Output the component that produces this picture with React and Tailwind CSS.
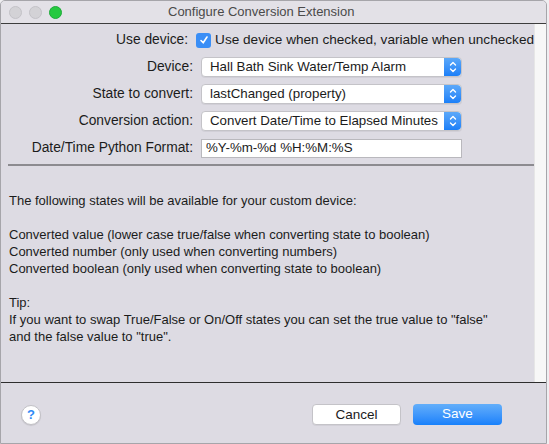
import { useState } from 'react';

const font = { fontFamily: '"Liberation Sans", Arial, sans-serif' };

// up/down chevrons on the blue stepper of a popup button
function Stepper() {
  return (
    <div className="flex h-full w-[17px] items-center justify-center rounded-r-[4px] bg-gradient-to-b from-[#5ba8f9] to-[#1a7ff8]">
      <svg width="8" height="12" viewBox="0 0 8 12" fill="none" stroke="white" strokeWidth="1.4" strokeLinecap="round" strokeLinejoin="round">
        <path d="M1.5 4 L4 1.5 L6.5 4" />
        <path d="M1.5 8 L4 10.5 L6.5 8" />
      </svg>
    </div>
  );
}

function Popup({ value }) {
  return (
    <div className="flex h-[20px] w-[261px] items-stretch rounded-[4px] border border-[#c4c3c8] bg-white shadow-[0_1px_0_rgba(0,0,0,0.05)]">
      <div className="flex flex-1 items-center whitespace-nowrap pl-[8px] text-[13.3px] text-[#1b1b1b]">{value}</div>
      <Stepper />
    </div>
  );
}

function Row({ label, children }) {
  return (
    <div className="flex h-[20px] items-center">
      <div className="w-[193px] whitespace-nowrap pr-[1px] text-right text-[13.8px] text-[#1b1b1b]">{label}</div>
      <div className="ml-[7px] flex items-center">{children}</div>
    </div>
  );
}

export default function App() {
  const [useDevice, setUseDevice] = useState(true);
  const [format, setFormat] = useState('%Y-%m-%d %H:%M:%S');

  return (
    <div className="h-[444px] w-[549px] overflow-hidden bg-[#efeef1]" style={font}>
      <div className="flex h-[444px] w-[547px] flex-col overflow-hidden rounded-t-[5px] border border-[#a6a5aa] bg-[#dddbe3]">
        {/* title bar */}
        <div className="flex h-[23px] shrink-0 items-center border-b border-[#3d3d3d] bg-[#e3e1e7]">
          <div className="ml-[8px] flex gap-[7px]">
            <span className="h-[13px] w-[13px] rounded-full border border-[#c3c2c7] bg-[#d3d2d6]" />
            <span className="h-[13px] w-[13px] rounded-full border border-[#c3c2c7] bg-[#d3d2d6]" />
            <span className="h-[13px] w-[13px] rounded-full border border-[#1eaa3a] bg-[#26c940]" />
          </div>
          <div className="ml-[106px] text-[13px] text-[#4a4a4a]">Configure Conversion Extension</div>
        </div>

        {/* form + scroller */}
        <div className="flex h-[359px] shrink-0 border-b border-[#2e2e2e]">
          <div className="flex-1 overflow-hidden">
            <div className="flex flex-col gap-[7px] pt-[6px]">
              <Row label="Use device:">
                <button
                  onClick={() => setUseDevice(!useDevice)}
                  className={`flex h-[15px] w-[15px] items-center justify-center rounded-[3px] ${useDevice ? 'bg-[#3a8ef6]' : 'border border-[#b5b5b5] bg-white'}`}
                >
                  {useDevice && (
                    <svg width="10" height="10" viewBox="0 0 10 10" fill="none" stroke="white" strokeWidth="1.6" strokeLinecap="round" strokeLinejoin="round">
                      <path d="M2 5.5 L4.2 7.8 L8 2" />
                    </svg>
                  )}
                </button>
                <span className="ml-[4px] whitespace-nowrap text-[13.6px] text-[#1b1b1b]">
                  Use device when checked, variable when unchecked
                </span>
              </Row>
              <Row label="Device:">
                <Popup value="Hall Bath Sink Water/Temp Alarm" />
              </Row>
              <Row label="State to convert:">
                <Popup value="lastChanged (property)" />
              </Row>
              <Row label="Conversion action:">
                <Popup value="Convert Date/Time to Elapsed Minutes" />
              </Row>
              <Row label="Date/Time Python Format:">
                <input
                  value={format}
                  onChange={(e) => setFormat(e.target.value)}
                  className="h-[19px] w-[261px] border border-[#b9b8bd] bg-white px-[4px] text-[13.3px] text-[#1b1b1b] outline-none"
                />
              </Row>
            </div>

            <div className="ml-[7px] mt-[6px] h-[2px] bg-[#8c8b90]" />

            <div className="pl-[8px] pt-[26px] text-[13px] leading-[17px] text-[#1b1b1b]">
              <p>The following states will be available for your custom device:</p>
              <p className="h-[17px]" />
              <p>Converted value (lower case true/false when converting state to boolean)</p>
              <p>Converted number (only used when converting numbers)</p>
              <p>Converted boolean (only used when converting state to boolean)</p>
              <p className="h-[17px]" />
              <p>Tip:</p>
              <p>If you want to swap True/False or On/Off states you can set the true value to "false"</p>
              <p>and the false value to "true".</p>
            </div>
          </div>
          <div className="w-[12px] border-l border-[#e6e6e6] bg-[#f7f7f7]" />
        </div>

        {/* footer */}
        <div className="flex flex-1 items-center pt-[2px]">
          <button className="ml-[20px] mt-[2px] flex h-[20px] w-[20px] items-center justify-center rounded-full border border-[#c2c1c6] bg-white text-[13px] font-bold text-[#2f8af5] shadow-[0_1px_1px_rgba(0,0,0,0.1)]">
            ?
          </button>
          <button className="ml-auto h-[21px] w-[89px] rounded-[4px] border border-[#c4c3c8] bg-white text-[13.5px] text-[#1b1b1b] shadow-[0_1px_0_rgba(0,0,0,0.05)]">
            Cancel
          </button>
          <button className="ml-[12px] mr-[44px] h-[21px] w-[89px] rounded-[4px] bg-gradient-to-b from-[#62aefa] to-[#1580fb] text-[13.5px] text-white">
            Save
          </button>
        </div>
      </div>
    </div>
  );
}
